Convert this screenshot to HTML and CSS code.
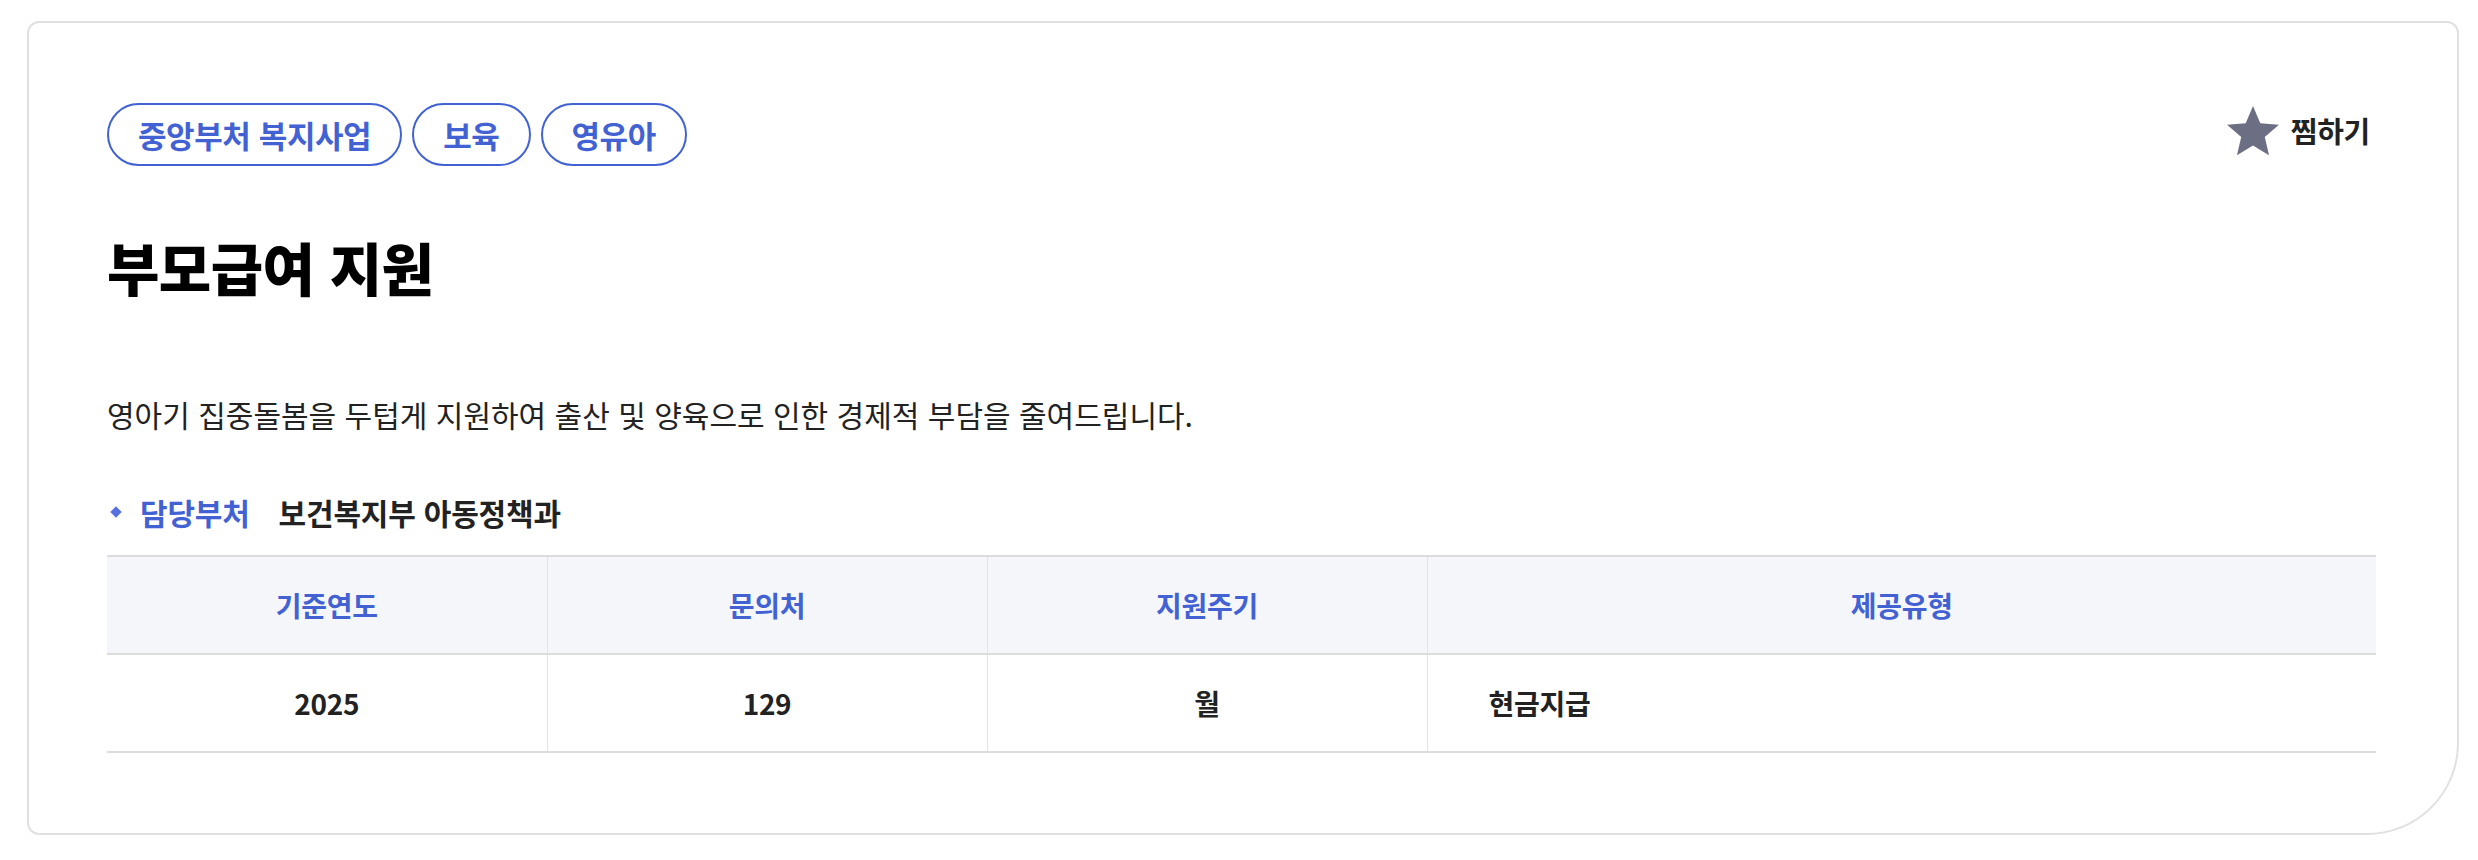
FILE: index.html
```html
<!DOCTYPE html>
<html lang="ko">
<head>
<meta charset="utf-8">
<title>부모급여 지원</title>
<link rel="stylesheet" href="styles.css">
</head>
<body>
<div class="card">
  <div class="top-row">
    <div class="tags">
      <span class="tag">중앙부처 복지사업</span>
      <span class="tag">보육</span>
      <span class="tag">영유아</span>
    </div>
    <button class="wish" type="button">
      <svg class="star" viewBox="2 2 20 19.27" width="52" height="50" aria-hidden="true"><path d="M12 17.27L18.18 21l-1.64-7.03L22 9.24l-7.19-.61L12 2 9.19 8.63 2 9.24l5.46 4.73L5.82 21z" fill="#6c6e84"/></svg>
      <span class="wish-label">찜하기</span>
    </button>
  </div>
  <h1 class="title">부모급여 지원</h1>
  <p class="desc">영아기 집중돌봄을 두텁게 지원하여 출산 및 양육으로 인한 경제적 부담을 줄여드립니다.</p>
  <div class="dept">
    <span class="diamond"></span>
    <span class="dept-label">담당부처</span>
    <span class="dept-value">보건복지부 아동정책과</span>
  </div>
  <table class="info">
    <thead>
      <tr>
        <th class="c1">기준연도</th>
        <th class="c2">문의처</th>
        <th class="c3">지원주기</th>
        <th class="c4">제공유형</th>
      </tr>
    </thead>
    <tbody>
      <tr>
        <td>2025</td>
        <td>129</td>
        <td>월</td>
        <td class="left">현금지급</td>
      </tr>
    </tbody>
  </table>
</div>
</body>
</html>
```
FILE: styles.css
```css
* { box-sizing: border-box; }
html, body {
  margin: 0;
  padding: 0;
  background: #ffffff;
}
body {
  font-family: "Noto Sans CJK KR", "Noto Sans", sans-serif;
  color: #222222;
}
.card {
  margin: 21px 0 0 27px;
  width: 2432px;
  height: 814px;
  border: 2px solid #e0e0e0;
  border-radius: 12px 12px 92px 12px;
  padding: 80px 81px 0 78px;
  background: #ffffff;
}
.top-row {
  display: flex;
  justify-content: space-between;
  align-items: center;
}
.tags {
  display: flex;
  gap: 10px;
}
.tag {
  display: inline-flex;
  align-items: center;
  height: 63px;
  padding: 0 29px;
  border: 2px solid #4262d4;
  border-radius: 32px;
  color: #4262d4;
  font-size: 31px;
  font-weight: 700;
  letter-spacing: -0.4px;
  line-height: 1;
}
.wish {
  display: flex;
  align-items: center;
  gap: 12px;
  border: 0;
  background: transparent;
  padding: 0;
  margin-right: 6px;
  margin-top: -8px;
  font-family: inherit;
  cursor: pointer;
}
.star { display: block; }
.wish-label {
  font-size: 29px;
  font-weight: 700;
  color: #222222;
  letter-spacing: -0.3px;
  line-height: 1;
}
.title {
  margin: 65px 0 0 0;
  font-size: 57px;
  line-height: 70px;
  font-weight: 800;
  color: #000000;
  letter-spacing: -0.6px;
}
.desc {
  margin: 93px 0 0 0;
  font-size: 30px;
  line-height: 40px;
  color: #222222;
  letter-spacing: 0;
}
.dept {
  margin-top: 58px;
  display: flex;
  align-items: center;
  height: 40px;
  font-size: 30px;
  letter-spacing: -0.2px;
}
.diamond {
  width: 8px;
  height: 8px;
  margin: 0 0 0 5px;
  background: #5570e0;
  transform: rotate(45deg);
}
.dept-label {
  margin-left: 20px;
  color: #4262d4;
  font-weight: 700;
}
.dept-value {
  margin-left: 29px;
  color: #222222;
  font-weight: 700;
}
.info {
  margin-top: 23px;
  width: 100%;
  border-collapse: collapse;
  table-layout: fixed;
}
.info .c1, .info .c2, .info .c3 { width: 440px; }
.info th, .info td {
  height: 98px;
  text-align: center;
  border-left: 1px solid #e2e2e2;
  font-size: 28px;
  letter-spacing: -0.3px;
  padding: 0;
}
.info th:first-child, .info td:first-child { border-left: 0; }
.info thead tr {
  background: #f5f6fa;
  border-top: 2px solid #dcdcdc;
  border-bottom: 2px solid #dcdcdc;
}
.info th {
  color: #4262d4;
  font-weight: 600;
}
.info tbody tr {
  border-bottom: 2px solid #dcdcdc;
}
.info td {
  color: #222222;
  font-weight: 600;
}
.info td.left {
  text-align: left;
  padding-left: 61px;
}
```
